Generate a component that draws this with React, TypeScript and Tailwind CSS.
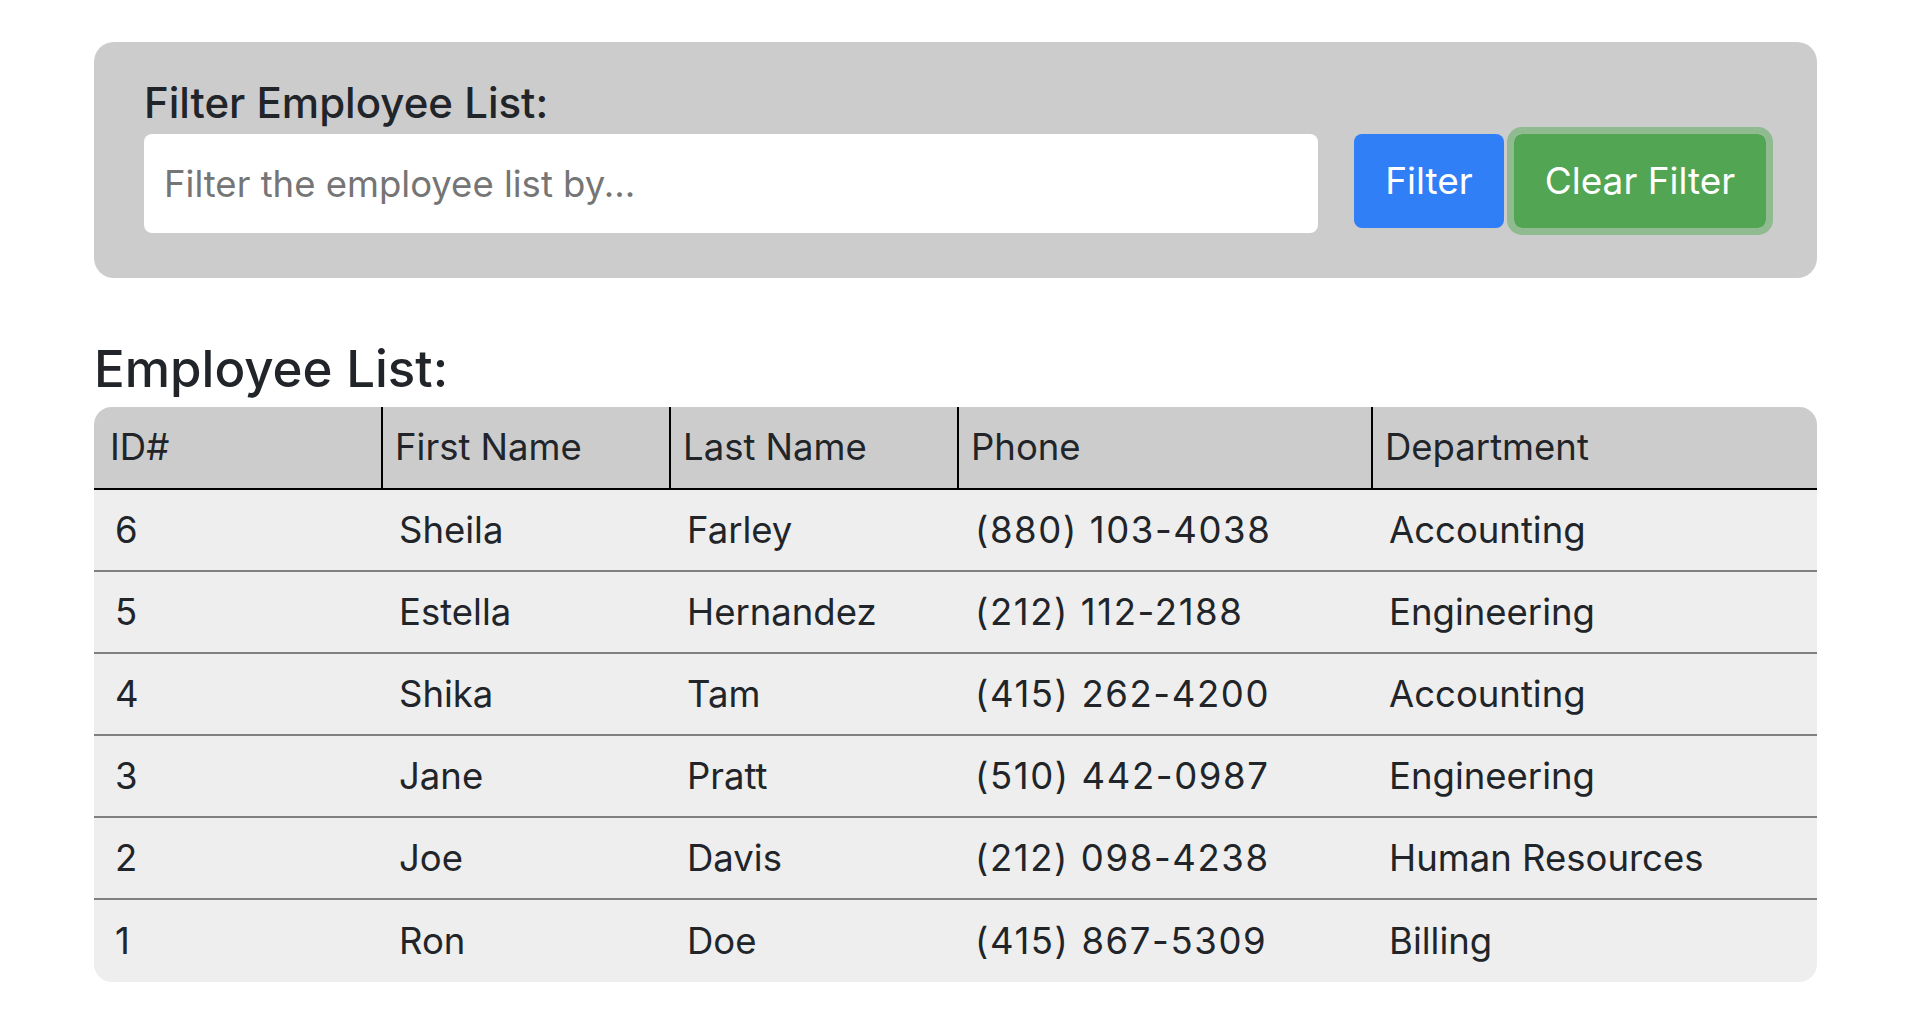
import { useState } from "react";

type Employee = {
  id: number;
  first: string;
  last: string;
  phone: string;
  dept: string;
};

const employees: Employee[] = [
  { id: 6, first: "Sheila", last: "Farley", phone: "(880) 103-4038", dept: "Accounting" },
  { id: 5, first: "Estella", last: "Hernandez", phone: "(212) 112-2188", dept: "Engineering" },
  { id: 4, first: "Shika", last: "Tam", phone: "(415) 262-4200", dept: "Accounting" },
  { id: 3, first: "Jane", last: "Pratt", phone: "(510) 442-0987", dept: "Engineering" },
  { id: 2, first: "Joe", last: "Davis", phone: "(212) 098-4238", dept: "Human Resources" },
  { id: 1, first: "Ron", last: "Doe", phone: "(415) 867-5309", dept: "Billing" },
];

const columns = ["ID#", "First Name", "Last Name", "Phone", "Department"];

export default function App() {
  const [query, setQuery] = useState("");
  const [applied, setApplied] = useState("");

  const rows = applied
    ? employees.filter((e) =>
        [e.id, e.first, e.last, e.phone, e.dept]
          .join(" ")
          .toLowerCase()
          .includes(applied.toLowerCase())
      )
    : employees;

  return (
    <div className="min-h-[1028px] bg-white pt-[42px] font-['Inter',sans-serif] text-[#212529]">
      <div className="ml-[94px] w-[1723px]">
        {/* Filter panel */}
        <div className="rounded-[20px] bg-[#cccccc] px-[50px] pt-[36px] pb-[45px]">
          <label className="mb-[6px] block text-[42px] font-medium leading-[50px]">
            Filter Employee List:
          </label>
          <div className="flex items-start">
            <input
              value={query}
              onChange={(e) => setQuery(e.target.value)}
              placeholder="Filter the employee list by..."
              className="h-[99px] w-[1174px] rounded-[8px] bg-white px-[20px] text-[36.5px] text-[#212529] outline-none placeholder:text-[#757575]"
            />
            <button
              onClick={() => setApplied(query)}
              className="ml-[36px] h-[94px] w-[150px] rounded-[8px] bg-[#307ff6] text-[37px] text-white"
            >
              Filter
            </button>
            <button
              onClick={() => {
                setQuery("");
                setApplied("");
              }}
              className="ml-[10px] h-[94px] w-[252px] rounded-[8px] bg-[#52a552] text-[37px] text-white outline-[7px] outline-solid outline-[#90ba8f]"
            >
              Clear Filter
            </button>
          </div>
        </div>

        {/* Employee table */}
        <h2 className="mt-[61px] mb-[8px] text-[51px] font-medium leading-[60px]">
          Employee List:
        </h2>
        <div className="overflow-hidden rounded-[18px] bg-[#eeeeee]">
          <table className="w-full table-fixed border-separate border-spacing-0 text-[36.5px]">
            <colgroup>
              <col className="w-[287px]" />
              <col className="w-[288px]" />
              <col className="w-[288px]" />
              <col className="w-[414px]" />
              <col className="w-[446px]" />
            </colgroup>
            <thead>
              <tr className="bg-[#cccccc]">
                {columns.map((c, i) => (
                  <th
                    key={c}
                    className={`h-[83px] border-b-2 border-black text-left font-normal ${
                      i === 0 ? "pl-[16px]" : "border-l-2 pl-[12px]"
                    }`}
                  >
                    {c}
                  </th>
                ))}
              </tr>
            </thead>
            <tbody>
              {rows.map((e, i) => {
                const last = i === rows.length - 1;
                const border = last ? "" : "border-b-2 border-[#808080]";
                return (
                  <tr key={e.id}>
                    <td className={`h-[82px] pl-[21px] ${border}`}>{e.id}</td>
                    <td className={`h-[82px] pl-[18px] ${border}`}>{e.first}</td>
                    <td className={`h-[82px] pl-[18px] ${border}`}>{e.last}</td>
                    <td className={`h-[82px] pl-[18px] tracking-[1.6px] ${border}`}>{e.phone}</td>
                    <td className={`h-[82px] pl-[18px] ${border}`}>{e.dept}</td>
                  </tr>
                );
              })}
            </tbody>
          </table>
        </div>
      </div>
    </div>
  );
}
